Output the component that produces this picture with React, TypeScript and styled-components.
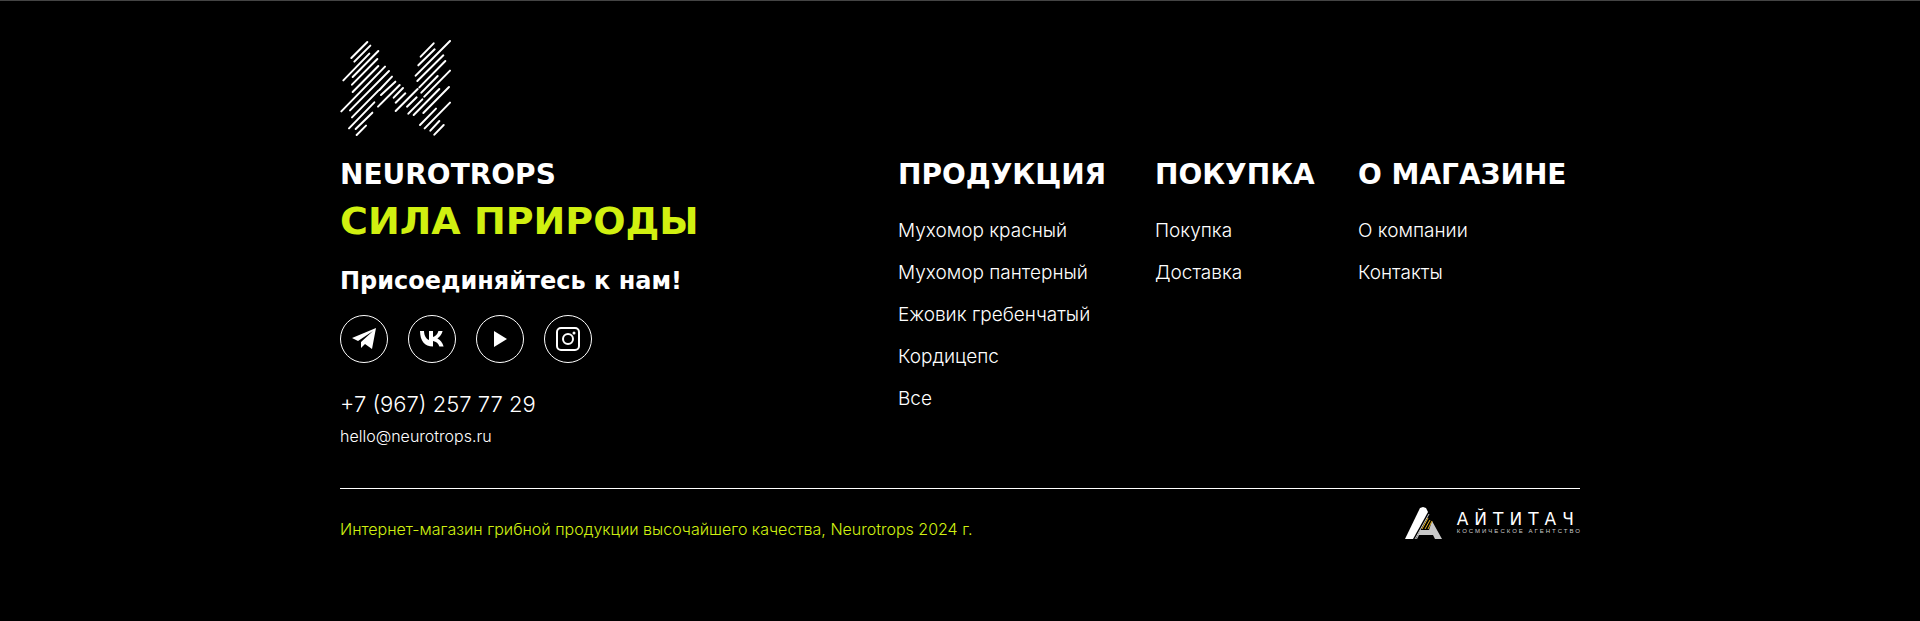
import React from 'react';
import styled, { createGlobalStyle } from 'styled-components';

const GlobalStyle = createGlobalStyle`
  * { box-sizing: border-box; }
  body { margin: 0; background: #000; color: #fff; font-family: Inter, "Open Sans", sans-serif; font-weight: 300; }
`;

const Footer = styled.footer`
  min-height: 100vh;
  padding: 39px 24px 48px;
  border-top: 1px solid #444;
  background: #000;
`;

const Container = styled.div`
  max-width: 1240px;
  margin: 0 auto;
`;

const LogoLink = styled.a`
  display: block;
  width: 111px;
  height: 96px;
  svg { display: block; }
`;

const Columns = styled.div`
  display: grid;
  grid-template-columns: 558fr 257fr 203fr 222fr;
  margin-top: 23px;
  padding-bottom: 40px;
  border-bottom: 1px solid #fff;
`;

const Heading = styled.h2`
  margin: 0;
  font: 700 28px/32px "DejaVu Sans", sans-serif;
  white-space: nowrap;
`;

const Slogan = styled.p`
  margin: 8px 0 0;
  color: #d0f010;
  font: 700 38px/44px "DejaVu Sans", sans-serif;
`;

const Invite = styled.h3`
  margin: 24px 0 0;
  font: 700 24px/28px "DejaVu Sans", sans-serif;
`;

const Socials = styled.div`
  display: flex;
  gap: 20px;
  margin-top: 20px;
`;

const SocialLink = styled.a`
  display: flex;
  align-items: center;
  justify-content: center;
  width: 48px;
  height: 48px;
  border: 1px solid #fff;
  border-radius: 50%;
  color: #fff;
`;

const ContactLink = styled.a<{ $large?: boolean }>`
  display: block;
  width: max-content;
  margin-top: ${(p) => (p.$large ? 25 : 4)}px;
  color: #fff;
  font-size: ${(p) => (p.$large ? 22 : 16)}px;
  line-height: ${(p) => (p.$large ? 32 : 24)}px;
  text-decoration: none;
`;

const LinkList = styled.ul`
  display: grid;
  gap: 18px;
  margin: 28px 0 0;
  padding: 0;
  list-style: none;
`;

const NavLink = styled.a`
  display: block;
  color: #fff;
  font-size: 19px;
  line-height: 24px;
  text-decoration: none;
`;

const Bottom = styled.div`
  display: flex;
  align-items: center;
  justify-content: space-between;
  padding-top: 18px;
`;

const Copyright = styled.p`
  margin: 0;
  padding-top: 12px;
  color: #d0f010;
  font-size: 16px;
  line-height: 20px;
`;

const Agency = styled.a`
  display: flex;
  align-items: center;
  gap: 14px;
  color: #fff;
  text-decoration: none;
`;

const AgencyName = styled.span`
  display: block;
  margin-right: -6px;
  font: 400 17px/16px "DejaVu Sans", sans-serif;
  letter-spacing: 6px;
`;

const AgencyNote = styled.span`
  display: block;
  margin-right: -2px;
  color: #ccc;
  font: 400 6px/8px "Liberation Sans", sans-serif;
  letter-spacing: 2px;
`;

const strokes = [
  [64, 84, 112, 36], [73, 95, 121, 47], [40, 151, 118, 71], [68, 141, 145, 63],
  [66, 164, 142, 87], [68, 186, 145, 108], [34, 244, 165, 110], [60, 241, 177, 123],
  [66, 262, 145, 182], [148, 180, 186, 140], [57, 295, 133, 217], [153, 195, 196, 155],
  [77, 297, 127, 248], [144, 230, 209, 165], [80, 315, 108, 287], [191, 203, 219, 174],
  [197, 218, 226, 190], [197, 243, 263, 177], [272, 80, 311, 40], [265, 106, 314, 58],
  [257, 137, 360, 33], [262, 153, 340, 76], [268, 172, 346, 93], [274, 188, 323, 138],
  [283, 200, 360, 122], [231, 230, 260, 202], [235, 251, 277, 208], [251, 255, 328, 177],
  [280, 249, 357, 171], [270, 285, 318, 236], [284, 295, 360, 218], [301, 302, 328, 273],
  [313, 314, 341, 285],
];

const Logo = () => (
  <svg width="111" height="96" viewBox="30 30 333 288" stroke="#fff" strokeWidth="6" strokeLinecap="round" aria-hidden="true">
    {strokes.map(([x1, y1, x2, y2]) => (
      <line key={`${x1}-${y1}`} x1={x1} y1={y1} x2={x2} y2={y2} />
    ))}
  </svg>
);

const socials = [
  { label: 'Telegram', icon: (
    <svg width="24" height="22" viewBox="0 0 24 22" fill="currentColor"><path d="M24 0 0 10l6 3L21 3 9 14v6l4-4 7 5z" /></svg>
  ) },
  { label: 'VK', icon: (
    <svg width="24" height="16" viewBox="0 0 24 16" fill="currentColor"><path d="M0 0h4c.2 5 2.400 8 5 9V0h4v6c2.400-.4 4.600-3 5.400-6H22.600c-.7 3.200-2.700 5.900-5.200 7.400 2.800 1.300 5.100 4 6.200 8.200h-4.200c-.9-3-3.100-5-6.400-5.500v5.500C4.500 15.600.2 10 0 0z" /></svg>
  ) },
  { label: 'YouTube', icon: (
    <svg width="14" height="16" viewBox="0 0 14 16" fill="currentColor"><path d="M1 0v16l13-8z" /></svg>
  ) },
  { label: 'Instagram', icon: (
    <svg width="24" height="24" viewBox="0 0 24 24" fill="none" stroke="currentColor" strokeWidth="2"><rect x="1" y="1" width="22" height="22" rx="4" /><circle cx="12" cy="12" r="5" /><circle cx="18" cy="6" r="1.500" fill="currentColor" stroke="none" /></svg>
  ) },
];

const menus = [
  { title: 'ПРОДУКЦИЯ', links: ['Мухомор красный', 'Мухомор пантерный', 'Ежовик гребенчатый', 'Кордицепс', 'Все'] },
  { title: 'ПОКУПКА', links: ['Покупка', 'Доставка'] },
  { title: 'О МАГАЗИНЕ', links: ['О компании', 'Контакты'] },
];

export default function App() {
  return (
    <>
      <GlobalStyle />
      <Footer>
        <Container>
          <LogoLink href="#" aria-label="Neurotrops"><Logo /></LogoLink>
          <Columns>
            <div>
              <Heading>NEUROTROPS</Heading>
              <Slogan>СИЛА ПРИРОДЫ</Slogan>
              <Invite>Присоединяйтесь к нам!</Invite>
              <Socials>
                {socials.map((s) => (
                  <SocialLink key={s.label} href="#" aria-label={s.label}>{s.icon}</SocialLink>
                ))}
              </Socials>
              <ContactLink $large href="tel:+79672577729">+7 (967) 257 77 29</ContactLink>
              <ContactLink href="mailto:hello@neurotrops.ru">hello@neurotrops.ru</ContactLink>
            </div>
            {menus.map((menu) => (
              <nav key={menu.title} aria-label={menu.title}>
                <Heading>{menu.title}</Heading>
                <LinkList>
                  {menu.links.map((link) => (
                    <li key={link}><NavLink href="#">{link}</NavLink></li>
                  ))}
                </LinkList>
              </nav>
            ))}
          </Columns>
          <Bottom>
            <Copyright>Интернет-магазин грибной продукции высочайшего качества, Neurotrops 2024 г.</Copyright>
            <Agency href="#">
              <svg width="38" height="32" viewBox="0 0 38 32" aria-hidden="true">
                <path d="M0 32 15 1l3-1 3 1 2 4L8 32z" fill="#fff" />
                <path d="M24 7 10 32" stroke="#c8c8c8" strokeWidth="1" />
                <path d="M27 14l10 18h-7l-2-4H14l-2 4h-1l4-9h9z" fill="#c8c8c8" />
                <path d="M23 11l-6 11M25 13l-5 9M27 14l-4 8" stroke="#e5b320" strokeWidth="1" />
              </svg>
              <span>
                <AgencyName>АЙТИТАЧ</AgencyName>
                <AgencyNote>КОСМИЧЕСКОЕ АГЕНТСТВО</AgencyNote>
              </span>
            </Agency>
          </Bottom>
        </Container>
      </Footer>
    </>
  );
}
